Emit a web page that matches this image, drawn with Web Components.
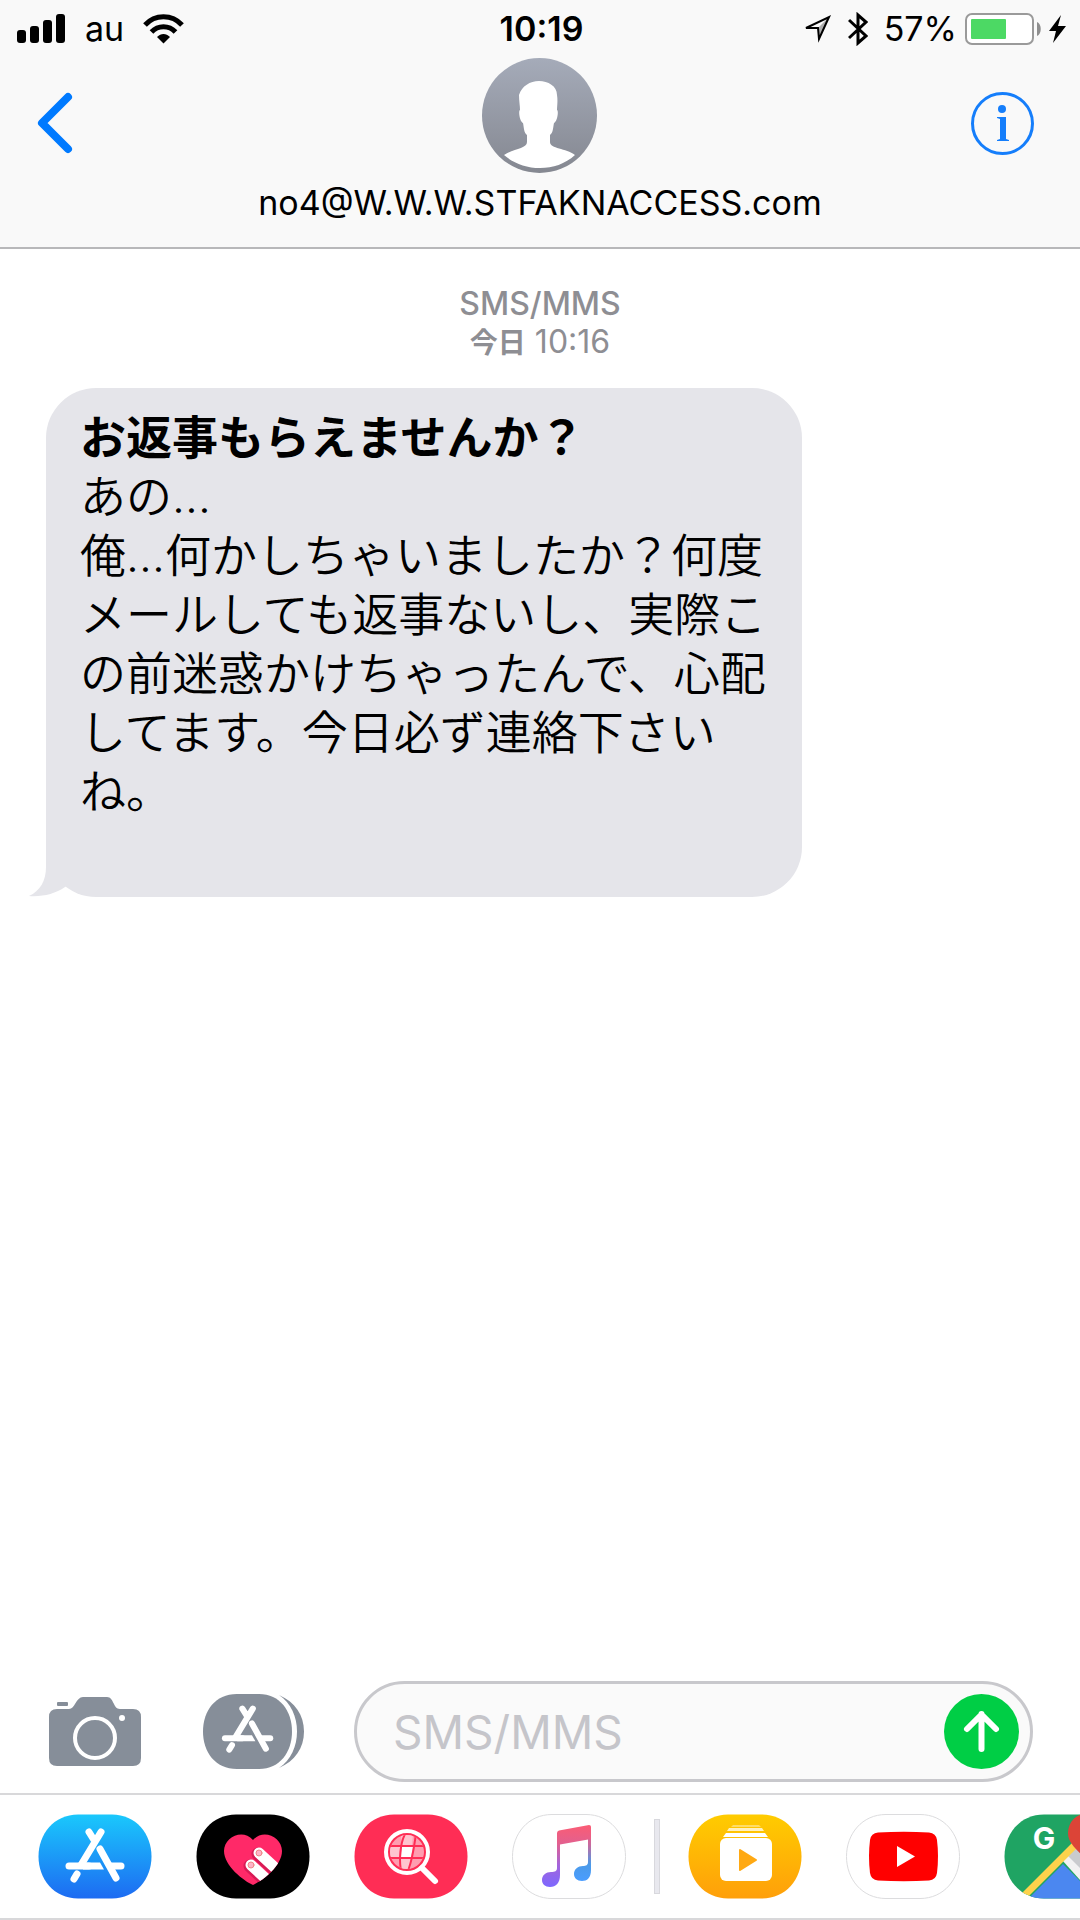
<!DOCTYPE html>
<html lang="ja">
<head>
<meta charset="utf-8">
<meta name="viewport" content="width=device-width, initial-scale=1">
<title>SMS/MMS</title>
<style>
  body {
    margin: 0;
    background: #fff;
    color: #000;
    font-family: Inter, "Noto Sans CJK JP", sans-serif;
  }
</style>
</head>
<body>
<message-screen>
  <status-bar slot="top" carrier="au" time="10:19" battery="57"></status-bar>
  <chat-header slot="top">no4@W.W.W.STFAKNACCESS.com</chat-header>

  <time-stamp service="SMS/MMS" day="今日">10:16</time-stamp>
  <message-bubble>
    <span slot="subject">お返事もらえませんか？</span>
    <p>あの…</p>
    <p>俺…何かしちゃいましたか？何度メールしても返事ないし、実際この前迷惑かけちゃったんで、心配してます。今日必ず連絡下さいね。</p>
  </message-bubble>

  <message-composer slot="bottom" placeholder="SMS/MMS"></message-composer>
  <app-strip slot="bottom">
    <app-tile name="appstore" label="App Store"></app-tile>
    <app-tile name="touch" label="Digital Touch"></app-tile>
    <app-tile name="images" label="#images"></app-tile>
    <app-tile name="music" label="Music"></app-tile>
    <app-tile slot="more" name="videos" label="Videos"></app-tile>
    <app-tile slot="more" name="youtube" label="YouTube"></app-tile>
    <app-tile slot="more" name="maps" label="Google Maps"></app-tile>
  </app-strip>
</message-screen>

<script>
const buttonReset = `
  button {
    display: block;
    flex: none;
    margin: 0;
    padding: 0;
    border: 0;
    background: none;
    cursor: pointer;
  }
  svg { display: block; flex: none; }
`;

// the crossed pencils, shared by the drawer button and the App Store tile
const pencils = `
  <g fill="none" stroke="#fff" stroke-width="7" stroke-linecap="round">
    <path d="M51 18L56 26M63 18L43 51"/>
    <path d="M31 52H51"/>
    <path d="M73 52H83"/>
    <path d="M39 60L36 65"/>
    <path d="M62 35L78 64"/>
  </g>
  <path d="M45 48.500H62L66 55.500H45Z" fill="#fff"/>
`;

const tileShape = 'M40 .5H74C98 .5 113.500 20 113.500 42.500S98 84.500 74 84.500H40C16 84.500 .5 65 .5 42.500S16 .5 40 .5Z';
const heart = 'M57 71C48 67 28 52 28 37C28 24 46 14 57 26C68 14 86 24 86 37C86 52 66 67 57 71Z';

const tiles = {
  appstore: `
    <linearGradient id="bg" x1="0" y1="0" x2="0" y2="1">
      <stop offset="0" stop-color="#1ac8fc"/><stop offset="1" stop-color="#1d6bf2"/>
    </linearGradient>
    <path d="${tileShape}" fill="url(#bg)"/>
    ${pencils}`,
  touch: `
    <clipPath id="heart"><path d="${heart}"/></clipPath>
    <path d="${tileShape}" fill="#000"/>
    <path d="${heart}" fill="#ff2968"/>
    <g clip-path="url(#heart)" stroke-linecap="round">
      <path d="M62 40L88 64M54 52L80 76" stroke="#d81b55" stroke-width="13"/>
      <path d="M63 39L89 63M55 51L81 75" stroke="#fff" stroke-width="11"/>
      <circle cx="63" cy="39" r="3" fill="#ffb3c9" stroke="#e88"/>
      <circle cx="55" cy="51" r="3" fill="#ffb3c9" stroke="#e88"/>
    </g>`,
  images: `
    <clipPath id="globe"><circle cx="53" cy="38" r="17"/></clipPath>
    <path d="${tileShape}" fill="#ff2d55"/>
    <g clip-path="url(#globe)">
      <path d="M34 20H72V56H34Z" fill="#ff9db0"/>
      <path d="M47 20H59L58 32H48ZM35 33H47L46 43H35ZM47 44H58L56 56H46Z" fill="#ffc4cf"/>
      <path d="M48 33H59L57 43H47Z" fill="#fff"/>
      <path d="M35 32H71M35 44H71M51 20C46 30 45 46 47 57M62 20C60 32 59 44 54 57" fill="none" stroke="#ff2d55" stroke-width="2"/>
    </g>
    <circle cx="53" cy="38" r="21" fill="none" stroke="#fff" stroke-width="4"/>
    <path d="M68 54L81 67" stroke="#fff" stroke-width="6" stroke-linecap="round"/>`,
  music: `
    <linearGradient id="left" x1="0" y1="11" x2="0" y2="73" gradientUnits="userSpaceOnUse">
      <stop offset="0" stop-color="#fb5c74"/><stop offset=".3" stop-color="#e2608f"/><stop offset=".65" stop-color="#a265dc"/><stop offset="1" stop-color="#7d68ff"/>
    </linearGradient>
    <linearGradient id="right" x1="0" y1="11" x2="0" y2="67" gradientUnits="userSpaceOnUse">
      <stop offset="0" stop-color="#fb5c74"/><stop offset=".35" stop-color="#c86a9e"/><stop offset=".7" stop-color="#4b9ae8"/><stop offset="1" stop-color="#4a9dff"/>
    </linearGradient>
    <path d="${tileShape}" fill="#fff" stroke="#dcdcde"/>
    <path d="M79 12V56C79 64 75 67 70 67C65 67 62 64 62 60C62 55 66 52 71 52C74 52 76 51 76 48V20Z" fill="url(#right)"/>
    <path d="M45 19Q45 17 47 16.500L77 11Q79 11 79 13V25L48 30.500V61C48 69 44 73 38 73C33 73 30 70 30 66C30 61 34 58 39 58C43 58 45 57 45 54Z" fill="url(#left)"/>`,
  videos: `
    <linearGradient id="bg" x1="0" y1="0" x2="0" y2="1">
      <stop offset="0" stop-color="#fc0"/><stop offset="1" stop-color="#ff9f0a"/>
    </linearGradient>
    <path d="${tileShape}" fill="url(#bg)"/>
    <path d="M45 11H71L73 13H43Z" fill="#fff" opacity=".4"/>
    <path d="M41 14H74L76 17H39Z" fill="#fff" opacity=".75"/>
    <path d="M38 19H77L80 23H35Z" fill="#fff"/>
    <rect x="32" y="24" width="52" height="43" rx="6" fill="#fff"/>
    <path d="M52 36L68 46L52 56Z" fill="#ffa913" stroke="#ffa913" stroke-width="2" stroke-linejoin="round"/>`,
  youtube: `
    <path d="${tileShape}" fill="#fff" stroke="#dcdcde"/>
    <path d="M32 18.500Q58 17 83 18.500Q90 19 91 26Q93 42 91 59Q90 66 83 66.500Q58 68 32 66.500Q25 66 24 59Q22 42 24 26Q25 19 32 18.500Z" fill="red"/>
    <path d="M51 32L69 42.500L51 53Z" fill="#fff"/>`,
  maps: `
    <clipPath id="tile"><path d="${tileShape}"/></clipPath>
    <g clip-path="url(#tile)">
      <path d="M0 0H114V85H0Z" fill="#1fa463"/>
      <path d="M60 42L68 34L84 34L114 64V97Z" fill="#c9cbce"/>
      <path d="M58 46L63 41L107 85H93Z" fill="#f2f2f2"/>
      <path d="M59 50L94 85H24Z" fill="#4b87f0"/>
      <path d="M73 29L17 85" stroke="#fdd24c" stroke-width="7"/>
      <path d="M64 19A20 20 0 0 1 104 19C104 33 90 34 84 52C80 38 64 33 64 19Z" fill="#dc4437"/>
    </g>
    <text x="40" y="35" text-anchor="middle" font-family="Inter, sans-serif" font-size="30" font-weight="700" fill="#fff">G</text>`
};

class MessageScreen extends HTMLElement {
  constructor() {
    super();
    this.attachShadow({ mode: 'open' }).innerHTML = `
      <style>
        :host { display: flex; flex-direction: column; min-height: 100vh; }
        header {
          background: #f9f9f9;
          border-bottom: 2px solid #b8b8ba;
        }
        main { flex: 1; padding: 36px 46px; }
      </style>
      <header><slot name="top"></slot></header>
      <main><slot></slot></main>
      <footer><slot name="bottom"></slot></footer>
    `;
  }
}

class StatusBar extends HTMLElement {
  connectedCallback() {
    const level = this.getAttribute('battery');
    this.attachShadow({ mode: 'open' }).innerHTML = `
      <style>
        :host {
          display: grid;
          grid-template-columns: 1fr auto 1fr;
          align-items: center;
          height: 58px;
          padding: 0 14px 0 17px;
          font-size: 34px;
          line-height: 40px;
        }
        div { display: flex; align-items: center; }
        svg { display: block; flex: none; }
        .left { gap: 19px; }
        .right { justify-content: flex-end; gap: 16px; }
        .power { gap: 8px; }
        time { font-weight: 600; }
      </style>
      <div class="left">
        <svg width="49" height="30" aria-label="signal">
          <rect y="16" width="9" height="13" rx="3"/>
          <rect x="13" y="12" width="9" height="17" rx="3"/>
          <rect x="26" y="6" width="9" height="23" rx="3"/>
          <rect x="39" width="9" height="29" rx="3"/>
        </svg>
        <span>${this.getAttribute('carrier')}</span>
        <svg width="41" height="30" viewBox="0 0 41 30" aria-label="wi-fi">
          <g fill="none" stroke="#000" stroke-width="5">
            <path d="M2 11C12 0 29 0 39 11"/>
            <path d="M8.500 18C15 11 26 11 32.500 18"/>
          </g>
          <path d="M14 23C18 19 23 19 27 23L20.500 29.500Z"/>
        </svg>
      </div>
      <time>${this.getAttribute('time')}</time>
      <div class="right">
        <svg width="29" height="30" viewBox="0 0 29 30" aria-label="location">
          <path d="M3 14L26 3L16 25L15 14Z" fill="none" stroke="#000" stroke-width="2"/>
          <path d="M15 14L26 3L16 25Z" opacity=".3"/>
        </svg>
        <svg width="20" height="34" viewBox="0 0 20 34" aria-label="bluetooth">
          <path d="M1 8L18 24L10 31V3L18 10L1 26" fill="none" stroke="#000" stroke-width="3"/>
        </svg>
        <div class="power">
          <span>${level}%</span>
          <svg width="76" height="34" aria-label="battery">
            <rect x="1" y="2" width="67" height="30" rx="6" fill="#fff" stroke="#9a9a9a" stroke-width="2"/>
            <rect x="6" y="7" width="${Math.round(level * .61)}" height="20" rx="1" fill="#4cd964"/>
            <path d="M72 10C77 12 77 22 72 24Z" fill="#8e8e8e"/>
          </svg>
          <svg width="17" height="28" viewBox="0 0 17 28" aria-label="charging">
            <path d="M12 0L0 16H7L4 28L17 11H9Z"/>
          </svg>
        </div>
      </div>
    `;
  }
}

class ChatHeader extends HTMLElement {
  constructor() {
    super();
    this.attachShadow({ mode: 'open' }).innerHTML = `
      <style>
        ${buttonReset}
        :host {
          display: grid;
          grid-template-columns: 1fr auto 1fr;
          align-items: start;
          padding: 0 46px 24px;
        }
        button { margin-top: 34px; }
        .back { margin-left: -10px; }
        .info { justify-self: end; }
        .contact {
          display: flex;
          flex-direction: column;
          align-items: center;
          gap: 10px;
        }
        .name { font-size: 34px; line-height: 40px; }
      </style>
      <button class="back" aria-label="戻る">
        <svg width="37" height="62" viewBox="0 0 37 62">
          <path d="M32 5L6 31L32 57" fill="none" stroke="#007aff" stroke-width="8" stroke-linecap="round" stroke-linejoin="round"/>
        </svg>
      </button>
      <div class="contact">
        <svg width="115" height="115" viewBox="0 0 115 115" aria-hidden="true">
          <linearGradient id="disc" x1="0" y1="0" x2="0" y2="1">
            <stop offset="0" stop-color="#a5abb9"/><stop offset="1" stop-color="#858891"/>
          </linearGradient>
          <circle cx="57.500" cy="57.500" r="57.500" fill="url(#disc)"/>
          <path d="M57 23C66 23 75 28 75 37C76 43 75 48 75 52C77 53 75 64 72 65C71 70 71 75 68 77L68 84C68 91 84 90 93 97C83 106 71 110 58 110C44 110 31 105 22 97C32 90 45 91 45 84L45 77C42 75 42 70 41 65C38 64 36 53 38 52C38 48 37 43 37 37C40 28 48 23 57 23Z" fill="#fff"/>
        </svg>
        <span class="name"><slot></slot></span>
      </div>
      <button class="info" aria-label="詳細">
        <svg width="63" height="63" viewBox="0 0 63 63">
          <circle cx="31.500" cy="31.500" r="30" fill="none" stroke="#157efb" stroke-width="3"/>
          <circle cx="31" cy="17" r="4" fill="#157efb"/>
          <path d="M26 25H35V47L38 48V49H26V48L29 47V27L26 26Z" fill="#157efb"/>
        </svg>
      </button>
    `;
  }
}

class TimeStamp extends HTMLElement {
  connectedCallback() {
    this.attachShadow({ mode: 'open' }).innerHTML = `
      <style>
        :host {
          display: block;
          margin-bottom: 26px;
          color: #8e8e93;
          font-size: 32px;
          line-height: 38px;
          text-align: center;
        }
        .service { font-weight: 500; }
        b { font-size: 28px; }
      </style>
      <div class="service">${this.getAttribute('service')}</div>
      <div><b>${this.getAttribute('day')}</b> <slot></slot></div>
    `;
  }
}

class MessageBubble extends HTMLElement {
  constructor() {
    super();
    this.attachShadow({ mode: 'open' }).innerHTML = `
      <style>
        :host {
          display: block;
          position: relative;
          box-sizing: border-box;
          width: fit-content;
          max-width: 70vw;
          padding: 20px 30px 76px 34px;
          border-radius: 50px;
          background: #e5e5ea;
          font-size: 46px;
          line-height: 59px;
          font-weight: 350;
        }
        .subject { font-weight: 700; }
        ::slotted(p) { margin: 0; }
        svg { position: absolute; left: -18px; bottom: 0; }
      </style>
      <div class="subject"><slot name="subject"></slot></div>
      <slot></slot>
      <svg width="60" height="60" viewBox="0 0 60 60" aria-hidden="true">
        <path d="M18 0V30C18 44 12 54 1 59C14 60 27 57 37 50L60 30V0Z" fill="#e5e5ea"/>
      </svg>
    `;
  }
}

class MessageComposer extends HTMLElement {
  connectedCallback() {
    const hint = this.getAttribute('placeholder');
    this.attachShadow({ mode: 'open' }).innerHTML = `
      <style>
        ${buttonReset}
        :host { display: block; padding: 0 47px 11px 49px; }
        form { display: flex; align-items: center; }
        .drawer { margin: 0 50px 0 62px; }
        .field {
          display: flex;
          flex: 1;
          align-items: center;
          min-width: 0;
          height: 95px;
          padding: 0 11px 0 36px;
          border: 3px solid #c8c8cc;
          border-radius: 51px;
          background: #fafafa;
        }
        input {
          flex: 1;
          min-width: 0;
          padding: 0;
          border: 0;
          outline: 0;
          background: none;
          color: #000;
          font: 46px/56px Inter, "Noto Sans CJK JP", sans-serif;
        }
        input::placeholder { color: #c5c5ca; opacity: 1; }
      </style>
      <form>
        <button type="button" aria-label="カメラ">
          <svg width="92" height="70" viewBox="0 0 92 70">
            <path d="M8 12H20C26 12 27 0 34 0H58C65 0 64 12 71 12H84Q92 12 92 20V61Q92 69 84 69H8Q0 69 0 61V20Q0 12 8 12Z" fill="#868e99"/>
            <rect x="8" y="5" width="11" height="4" rx="1" fill="#868e99"/>
            <circle cx="46" cy="41" r="20" fill="none" stroke="#fff" stroke-width="4"/>
            <circle cx="73" cy="21" r="3" fill="#fff"/>
          </svg>
        </button>
        <button class="drawer" type="button" aria-label="アプリ">
          <svg width="101" height="75" viewBox="0 0 101 75">
            <path d="M34 0H56C77 0 89 17 89 37.500S77 75 56 75H34C12 75 0 58 0 37.500S12 0 34 0Z" fill="#868e99"/>
            <path d="M76 1C92 8 101 21 101 37.500S92 67 76 74C88 66 94 52 94 37.500S88 9 76 1Z" fill="#868e99"/>
            <g transform="translate(-5 -1) scale(.87)">${pencils}</g>
          </svg>
        </button>
        <div class="field">
          <input type="text" placeholder="${hint}" aria-label="${hint}">
          <button type="submit" aria-label="送信">
            <svg width="75" height="75" viewBox="0 0 75 75">
              <circle cx="37.500" cy="37.500" r="37.500" fill="#00ce45"/>
              <path d="M37.500 55V20M23 35L37.500 20.500L52 35" fill="none" stroke="#fff" stroke-width="6" stroke-linecap="round" stroke-linejoin="round"/>
            </svg>
          </button>
        </div>
      </form>
    `;
    this.shadowRoot.querySelector('form').addEventListener('submit', (event) => event.preventDefault());
  }
}

class AppStrip extends HTMLElement {
  constructor() {
    super();
    this.attachShadow({ mode: 'open' }).innerHTML = `
      <style>
        :host {
          display: flex;
          align-items: center;
          overflow: hidden;
          padding: 19px 0 19px 38px;
          border-top: 2px solid #d8d8da;
          border-bottom: 2px solid #d8d8da;
        }
        .group { display: flex; flex: none; gap: 44px; }
        .divider {
          flex: none;
          box-sizing: border-box;
          width: 6px;
          height: 75px;
          margin: 0 28px;
          border: 1px solid #d8d8dd;
          background: #e8e8ee;
        }
      </style>
      <div class="group"><slot></slot></div>
      <div class="divider"></div>
      <div class="group"><slot name="more"></slot></div>
    `;
  }
}

class AppTile extends HTMLElement {
  connectedCallback() {
    this.attachShadow({ mode: 'open' }).innerHTML = `
      <style>
        ${buttonReset}
        :host { display: block; flex: none; }
      </style>
      <button aria-label="${this.getAttribute('label')}">
        <svg width="114" height="85" viewBox="0 0 114 85">${tiles[this.getAttribute('name')]}</svg>
      </button>
    `;
  }
}

customElements.define('message-screen', MessageScreen);
customElements.define('status-bar', StatusBar);
customElements.define('chat-header', ChatHeader);
customElements.define('time-stamp', TimeStamp);
customElements.define('message-bubble', MessageBubble);
customElements.define('message-composer', MessageComposer);
customElements.define('app-strip', AppStrip);
customElements.define('app-tile', AppTile);
</script>
</body>
</html>
